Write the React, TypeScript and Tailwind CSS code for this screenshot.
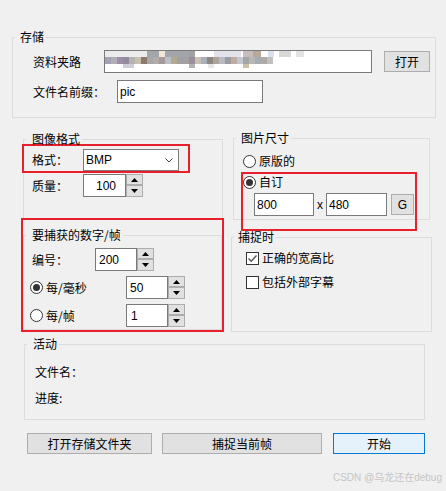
import React from "react";

const cjk = "font-['Noto_Sans_CJK_SC','Liberation_Sans',sans-serif]";
const latin = "font-['Liberation_Sans','Noto_Sans_CJK_SC',sans-serif]";

interface GroupProps {
    title: string,
    className: string,
    legendPad: string,
    children?: React.ReactNode
}
const Group = ({ title, className, legendPad, children }: GroupProps) => (
    <fieldset className={`border border-[#dcdcdc] min-w-0 ${className}`}>
        <legend className={`ml-[2px] pr-[2px] leading-[14px] ${legendPad}`}>{title}</legend>
        {children}
    </fieldset>
)

const Field = ({ w, value, pl }: { w: string, value?: string, pl: string }) => (
    <div className={`h-[23px] bg-white border border-[#7a7a7a] flex items-center text-[12px] ${latin} ${w} ${pl}`}>{value}</div>
)

const Arrow = ({ down }: { down?: boolean }) => (
    <svg width="7" height="4" viewBox="0 0 7 4">
        <path d={down ? "M0 0 L3.5 4 L7 0Z" : "M0 4 L3.5 0 L7 4Z"} fill="#000" />
    </svg>
)

const Spin = () => (
    <div className="flex flex-col w-[17px] h-[23px]">
        <div className="h-[11px] border border-[#adadad] bg-[#e1e1e1] flex items-center justify-center"><Arrow /></div>
        <div className="h-[12px] border border-[#adadad] bg-[#e1e1e1] flex items-center justify-center"><Arrow down /></div>
    </div>
)

const Radio = ({ checked }: { checked?: boolean }) => (
    <span className="w-[13px] h-[13px] shrink-0 rounded-full border border-[#333333] bg-white flex items-center justify-center">
        {checked ? <span className="w-[7px] h-[7px] rounded-full bg-[#333333]" /> : null}
    </span>
)

const Check = ({ checked }: { checked?: boolean }) => (
    <span className="w-[13px] h-[13px] shrink-0 border border-[#333333] bg-white flex items-center justify-center">
        {checked ? (
            <svg width="11" height="11" viewBox="0 0 11 11">
                <path d="M1.5 5.5 L4.2 8.2 L9.5 2.5" fill="none" stroke="#555555" strokeWidth="1.4" />
            </svg>
        ) : null}
    </span>
)

const Btn = ({ w, label, primary }: { w: string, label: string, primary?: boolean }) => (
    <div className={`h-[21px] flex items-center justify-center border ${primary ? "border-[#0078d7] bg-[#e5f1fb]" : "border-[#adadad] bg-[#e1e1e1]"} ${w}`}>{label}</div>
)

// mosaic blur over the folder path
const row1 = [
    [0, 42, "#ebebeb"], [42, 48, "#a2a6aa"], [54, 6, "#f2e6da"], [84, 6, "#9ea2a2"],
    [109, 27, "#e2e2ea"], [138, 10, "#c8bcbc"], [148, 8, "#b8a898"], [163, 6, "#dde0f0"],
    [174, 12, "#d8d8d8"], [191, 8, "#e2e2e2"],
] as const
const row2 = ["#a3a2b4", "#b1aeb6", "#9c8fa6", "#958a9e", "#b5b3ae", "#c8bfae", "#8c7b6c", "#a8a8a8",
    "#b4aca6", "#a49a9c", "#bcbfc8", "#b4a88e", "#9ea2a2", "#a2a0a0", "#9a8e9c", "#c8c2b6", "#a8b0bc",
    "#8e8680", "#aca49a", "#b4bcc6", "#9e9c9e", "#bcaea4", "#c4c8ce", "#a4a4a4", "#b8b8b8", "#a6acb2",
    "#b0aaa6", "#c0c0c0"]
const row3 = [[18, 11, "#cfcfdc"], [84, 6, "#b0b2b4"], [103, 6, "#e6e6e6"], [138, 6, "#cdbfa8"]] as const

const Mosaic = () => (
    <svg width="220" height="20" viewBox="0 0 220 20" className="block">
        {row1.map(([x, w, c], i) => <rect key={"a" + i} x={x} y={0} width={w} height={6} fill={c} />)}
        {row2.map((c, i) => <rect key={"b" + i} x={i * 6} y={6} width={6} height={7} fill={c} />)}
        {row3.map(([x, w, c], i) => <rect key={"c" + i} x={x} y={13} width={w} height={4} fill={c} />)}
    </svg>
)

export default function App() {
    return (
        <div className={`w-[446px] h-[491px] bg-[#f0f0f0] pt-[30px] text-[12px] leading-[14px] text-black overflow-hidden ${cjk}`}>
            {/* 存储 */}
            <Group title="存储" className="ml-[12px] w-[424px] h-[88px]" legendPad="pl-[5px]">
                <div className="mt-[6px] flex items-center pl-[20px]">
                    <span className="w-[71px]">资料夹路</span>
                    <div className="w-[268px] h-[23px] bg-white border border-[#7a7a7a] overflow-hidden"><Mosaic /></div>
                    <div className="ml-[12px]"><Btn w="w-[46px]" label="打开" /></div>
                </div>
                <div className="mt-[7px] flex items-center pl-[20px]">
                    <span className="w-[84px]">文件名前缀：</span>
                    <Field w="w-[146px]" value="pic" pl="pl-[2px]" />
                </div>
            </Group>

            <div className="mt-[13px] flex items-start">
                {/* left column */}
                <div className="ml-[21px] w-[203px] mt-[1px] flex flex-col">
                    <Group title="图像格式" className="ml-[2px] w-[200px] h-[87px]" legendPad="pl-[6px]">
                        <div className="-ml-[2px] -mt-[2px] w-[168px] h-[29px] border-2 border-[#e8202a] flex items-start pt-[3px] pl-[8px]">
                            <span className="w-[51px] h-[22px] flex items-center">格式：</span>
                            <div className={`w-[96px] h-[22px] bg-white border border-[#7a7a7a] flex items-center justify-between pl-[2px] pr-[5px] ${latin}`}>
                                <span>BMP</span>
                                <svg width="8" height="5" viewBox="0 0 8 5"><path d="M0.5 0.5 L4 4 L7.5 0.5" fill="none" stroke="#444444" /></svg>
                            </div>
                        </div>
                        <div className="mt-[1px] flex items-center pl-[8px]">
                            <span className="w-[51px]">质量：</span>
                            <Field w="w-[43px]" value="100" pl="pl-[12px]" />
                            <Spin />
                        </div>
                    </Group>
                    <div className="-mt-[1px] w-[203px] h-[114px] border-2 border-[#e8202a] relative">
                        <Group title="要捕获的数字/帧" className="mt-[8px] w-[199px] h-[102px]" legendPad="pl-[6px]">
                            <div className="mt-[6px] flex items-center pl-[8px]">
                                <span className="w-[63px]">编号：</span>
                                <Field w="w-[42px]" value="200" pl="pl-[3px]" />
                                <Spin />
                            </div>
                            <div className="mt-[5px] flex items-center pl-[6px]">
                                <div className="w-[96px] flex items-center">
                                    <Radio checked />
                                    <span className="ml-[3px]">每/毫秒</span>
                                </div>
                                <Field w="w-[42px]" value="50" pl="pl-[3px]" />
                                <Spin />
                            </div>
                            <div className="mt-[5px] flex items-center pl-[6px]">
                                <div className="w-[96px] flex items-center">
                                    <Radio />
                                    <span className="ml-[3px]">每/帧</span>
                                </div>
                                <Field w="w-[42px]" value="1" pl="pl-[4px]" />
                                <Spin />
                            </div>
                        </Group>
                    </div>
                </div>

                {/* right column */}
                <div className="ml-[7px] w-[201px] flex flex-col">
                    <Group title="图片尺寸" className="ml-[2px] w-[197px] h-[89px]" legendPad="pl-[5px]">
                        <div className="mt-[9px] h-[14px] flex items-center pl-[9px]">
                            <Radio />
                            <span className="ml-[3px]">原版的</span>
                        </div>
                        <div className="mt-[4px] ml-[7px] w-[176px] h-[59px] border-2 border-[#e8202a] relative">
                            <div className="mt-[1px] h-[14px] flex items-center">
                                <Radio checked />
                                <span className="ml-[3px]">自订</span>
                            </div>
                            <div className="mt-[4px] flex items-center pl-[11px]">
                                <Field w="w-[60px]" value="800" pl="pl-[2px]" />
                                <span className={`w-[12px] text-center ${latin}`}>x</span>
                                <Field w="w-[61px]" value="480" pl="pl-[2px]" />
                                <div className={`ml-[4px] ${latin}`}><Btn w="w-[23px]" label="G" /></div>
                            </div>
                        </div>
                    </Group>
                    <Group title="捕捉时" className="mt-[10px] w-[201px] h-[102px]" legendPad="pl-[4px]">
                        <div className="mt-[7px] h-[14px] flex items-center pl-[14px]">
                            <Check checked />
                            <span className="ml-[3px]">正确的宽高比</span>
                        </div>
                        <div className="mt-[10px] h-[14px] flex items-center pl-[14px]">
                            <Check />
                            <span className="ml-[3px]">包括外部字幕</span>
                        </div>
                    </Group>
                </div>
            </div>

            {/* 活动 */}
            <Group title="活动" className="mt-[5px] ml-[24px] w-[401px] h-[83px]" legendPad="pl-[6px]">
                <div className="mt-[14px] pl-[10px]">文件名：</div>
                <div className="mt-[12px] pl-[10px]">进度:</div>
            </Group>

            <div className="mt-[13px] flex items-center pl-[27px]">
                <Btn w="w-[125px]" label="打开存储文件夹" />
                <div className="ml-[10px]"><Btn w="w-[160px]" label="捕捉当前帧" /></div>
                <div className="ml-[11px]"><Btn w="w-[92px]" label="开始" primary /></div>
            </div>

            <div className={`mt-[17px] h-[14px] flex justify-end pr-[4px] text-[10px] text-[#c6c6c6] ${latin}`}>CSDN @乌龙还在debug</div>
        </div>
    )
}
